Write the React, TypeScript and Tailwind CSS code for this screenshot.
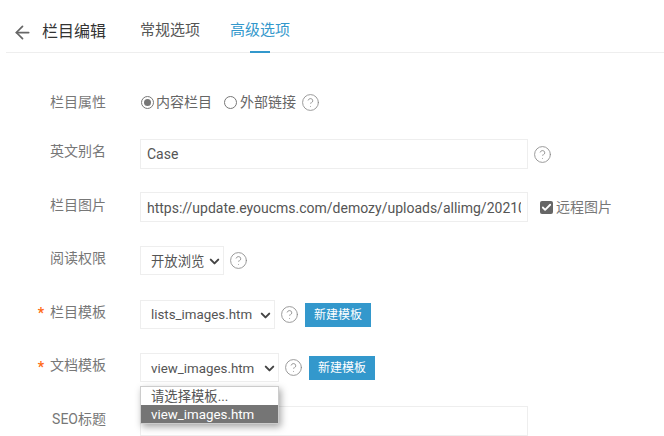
import { useState } from "react";
import { ArrowLeft, Check, ChevronDown, CircleHelp } from "lucide-react";

const font = "font-['Roboto','Noto_Sans_CJK_SC',sans-serif]";

function Help() {
  return <CircleHelp className="w-[19px] h-[19px] text-[#8c8c8c] shrink-0" strokeWidth={1.1} />;
}

function Row({ label, required, children }: { label: string; required?: boolean; children: React.ReactNode }) {
  return (
    <div className="flex items-center h-[30px]">
      <div className="w-[106px] flex justify-end items-center text-[14px] text-[#777] -mt-[4px]">
        {required && <span className="text-[#ff6a13] font-bold mr-[6px] mt-[3px]">*</span>}
        {label}
      </div>
      <div className="ml-[34px] flex items-center">{children}</div>
    </div>
  );
}

function FakeSelect({ value, width }: { value: string; width: string }) {
  return (
    <div className={`${width} h-[29px] border border-[#eee] bg-white flex items-center justify-between pl-[10px] pr-[1px] pt-[2px] text-[13.33px] text-[#555]`}>
      <span>{value}</span>
      <ChevronDown className="w-[15px] h-[15px] text-[#444]" strokeWidth={3.2} />
    </div>
  );
}

function NewButton() {
  return (
    <button className="h-[24px] w-[66px] bg-[#3398cc] text-white text-[12px]">新建模板</button>
  );
}

export default function App() {
  const [tab] = useState("advanced");

  return (
    <div className={`w-[664px] h-[436px] overflow-hidden bg-white ${font}`}>
      {/* Header */}
      <div className="ml-[6px] h-[53px] pt-[12px] border-b border-[#eeeeee] flex items-center">
        <ArrowLeft className="ml-[6px] w-[21px] h-[21px] text-[#666]" strokeWidth={2} />
        <span className="ml-[9px] text-[16px] text-[#333]">栏目编辑</span>
        <span className="ml-[34px] text-[15px] text-[#555] -mt-[4px]">常规选项</span>
        <div className="relative ml-[30px] h-full flex items-center">
          <span className={`text-[15px] -mt-[4px] ${tab === "advanced" ? "text-[#3398cc]" : ""}`}>高级选项</span>
          <div className="absolute bottom-[-1px] left-[20px] w-[20px] h-[2px] bg-[#3398cc]" />
        </div>
      </div>

      {/* Form */}
      <div className="pt-[32px] flex flex-col gap-[23.5px]">
        <div className="h-[30px] mt-[4px] -mb-[4px]">
          <Row label="栏目属性">
            <div className="flex items-center text-[14px] text-[#666] -mt-[3px]">
              <span className="ml-[1px] w-[13px] h-[13px] rounded-full border border-[#777] flex items-center justify-center">
                <span className="w-[7px] h-[7px] rounded-full bg-[#777]" />
              </span>
              <span className="ml-[2px]">内容栏目</span>
              <span className="ml-[12px] w-[13px] h-[13px] rounded-full border border-[#777]" />
              <span className="ml-[3px]">外部链接</span>
              <span className="ml-[5px]"><Help /></span>
            </div>
          </Row>
        </div>

        <Row label="英文别名">
          <div className="w-[388px] h-[30px] border border-[#eee] flex items-center px-[6px] pt-[2px] text-[14px] text-[#555]">Case</div>
          <span className="ml-[5px] mt-[2px]"><Help /></span>
        </Row>

        <Row label="栏目图片">
          <div className="w-[388px] h-[30px] border border-[#eee] flex items-center pl-[6px] pr-[6px] pt-[2px] text-[14px] text-[#555] whitespace-nowrap">
            <span className="block w-full overflow-hidden">https://update.eyoucms.com/demozy/uploads/allimg/20210</span>
          </div>
          <span className="ml-[12px] w-[13px] h-[13px] rounded-[2px] bg-[#666] flex items-center justify-center">
            <Check className="w-[11px] h-[11px] text-white" strokeWidth={4} />
          </span>
          <span className="ml-[3px] text-[14px] text-[#777]">远程图片</span>
        </Row>

        <Row label="阅读权限">
          <FakeSelect value="开放浏览" width="w-[84px]" />
          <span className="ml-[5px]"><Help /></span>
        </Row>

        <Row label="栏目模板" required>
          <FakeSelect value="lists_images.htm" width="w-[135px]" />
          <span className="ml-[5px]"><Help /></span>
          <span className="ml-[6px]"><NewButton /></span>
        </Row>

        <div className="relative">
          <Row label="文档模板" required>
            <FakeSelect value="view_images.htm" width="w-[139px]" />
            <span className="ml-[5px]"><Help /></span>
            <span className="ml-[6px]"><NewButton /></span>
          </Row>
          {/* open dropdown */}
          <div className="absolute left-[140px] top-[33px] w-[139px] z-10 bg-white border border-[#ccc] shadow-[2px_3px_7px_rgba(0,0,0,0.35)] text-[13.33px] leading-[20px] text-[#555]">
            <div className="pl-[10px] h-[18px]">请选择模板...</div>
            <div className="pl-[10px] h-[18px] bg-[#757575] text-white">view_images.htm</div>
          </div>
        </div>

        <Row label="SEO标题">
          <div className="w-[388px] h-[30px] border border-[#eee]" />
        </Row>
      </div>
    </div>
  );
}
